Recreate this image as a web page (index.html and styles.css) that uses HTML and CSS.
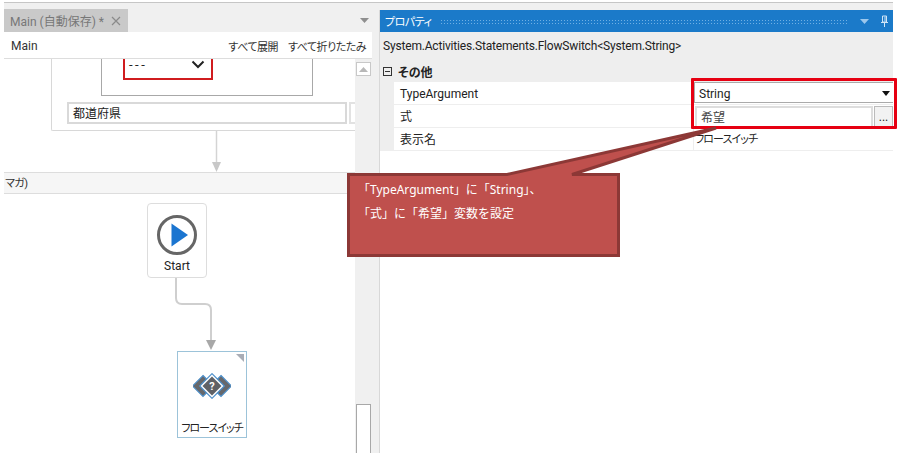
FILE: index.html
```html
<!DOCTYPE html>
<html lang="ja">
<head>
    <meta charset="UTF-8">
    <meta name="viewport" content="width=device-width, initial-scale=1.0">
    <title>フロースイッチのプロパティ</title>
    <link rel="stylesheet" href="styles.css">
</head>
<body>
    <div class="top-line"></div>
    <div class="app">

        <section class="designer">
            <div class="tab-strip">
                <div class="tab">
                    <span>Main (自動保存) *</span>
                    <svg class="tab-close" width="10" height="10" viewBox="0 0 10 10"><path d="M1 1l8 8M9 1l-8 8" stroke="#8a8a8a" stroke-width="1.2" fill="none"/></svg>
                </div>
                <svg class="tab-menu" width="9" height="5" viewBox="0 0 9 5"><path d="M0 0h9L4.5 5z" fill="#8f8f8f"/></svg>
            </div>
            <div class="breadcrumb">
                <span>Main</span>
                <div class="breadcrumb-actions">
                    <span class="jp-narrow">すべて展開</span>
                    <span class="jp-narrow">すべて折りたたみ</span>
                </div>
            </div>
            <div class="canvas-wrap">
                <div class="canvas">
                    <div class="seq-box"></div>
                    <div class="inner-box"></div>
                    <div class="red-select">
                        <span>---</span>
                        <svg width="14" height="9" viewBox="0 0 14 9"><path d="M1.5 1.5L7 7l5.500-5.500" stroke="#222" stroke-width="2" fill="none"/></svg>
                    </div>
                    <div class="pref-input">都道府県</div>
                    <div class="pref-btn"></div>
                    <div class="band"><span class="jp-narrow">マガ)</span></div>

                    <svg class="wires" width="351" height="394" viewBox="0 0 351 394">
                        <path d="M212.500 72V105" stroke="#d4d4d4" stroke-width="1.500" fill="none"/>
                        <path d="M208 103h9l-4.500 10z" fill="#c8c8c8"/>
                        <path d="M172 219v20q0 6 6 6h23q6 0 6 6v31" stroke="#cfcfcf" stroke-width="2" fill="none"/>
                        <path d="M202 281h10l-5 10z" fill="#a8a8a8"/>
                    </svg>

                    <div class="node node-start">
                        <svg width="42" height="42" viewBox="0 0 42 42">
                            <circle cx="21" cy="21" r="18.500" fill="none" stroke="#666" stroke-width="3"/>
                            <path d="M15.500 9.500L32 21 15.500 32.500z" fill="#1b75d0"/>
                        </svg>
                        <span class="node-label">Start</span>
                    </div>
                    <div class="node node-switch">
                        <span class="node-corner"></span>
                        <svg width="38" height="26" viewBox="0 0 38 26">
                            <path d="M10 2.500L20.500 13 10 23.500-.5 13z" fill="#66686c" stroke="#4d8fca" stroke-width="1.200"/>
                            <path d="M28 2.500L38.500 13 28 23.500 17.500 13z" fill="#66686c" stroke="#4d8fca" stroke-width="1.200"/>
                            <path d="M19 .7L31.300 13 19 25.300 6.700 13z" fill="#fff" stroke="#4d8fca" stroke-width="1.200"/>
                            <path d="M19 3.500L28.500 13 19 22.500 9.500 13z" fill="#5f6166"/>
                            <text x="19" y="17" class="switch-mark">?</text>
                        </svg>
                        <span class="node-label jp-narrow">フロースイッチ</span>
                    </div>
                </div>
                <div class="scrollbar">
                    <div class="scroll-up">
                        <svg width="9" height="5" viewBox="0 0 9 5"><path d="M0 5h9L4.500 0z" fill="#b8b8b8"/></svg>
                    </div>
                    <div class="scroll-thumb"></div>
                </div>
            </div>
        </section>

        <section class="props">
            <div class="props-title">
                <span class="jp-narrow">プロパティ</span>
                <div class="grip"></div>
                <svg width="9" height="5" viewBox="0 0 9 5"><path d="M0 0h9L4.500 5z" fill="#9cc7ec"/></svg>
                <svg class="pin" width="9" height="12" viewBox="0 0 9 12"><path d="M2.500 1h4v6h-4zM1 7.500h7M4.500 8v4M5 1.500v5" stroke="#cfe4f6" fill="none"/></svg>
            </div>
            <div class="props-type">System.Activities.Statements.FlowSwitch&lt;System.String&gt;</div>
            <div class="props-cat">
                <span class="collapse-box"></span>
                <span>その他</span>
            </div>
            <div class="prop-rows">
                <div class="prop-row">
                    <div class="prop-name">TypeArgument</div>
                    <div class="prop-value">
                        <div class="combo">
                            <span>String</span>
                            <svg width="8" height="5" viewBox="0 0 8 5"><path d="M0 0h8L4 5z" fill="#111"/></svg>
                        </div>
                    </div>
                </div>
                <div class="prop-row">
                    <div class="prop-name">式</div>
                    <div class="prop-value">
                        <div class="expr">希望</div>
                        <div class="expr-btn">...</div>
                    </div>
                </div>
                <div class="prop-row">
                    <div class="prop-name">表示名</div>
                    <div class="prop-value plain"><span class="jp-narrow">フロースイッチ</span></div>
                </div>
            </div>
        </section>
    </div>

    <!-- 注釈 -->
    <div class="highlight"></div>
    <svg class="callout-shape" width="901" height="453" viewBox="0 0 901 453">
        <path d="M348.500 174.500H507L716 128 572 174.500H618.500V255.500H348.500z" fill="#bf504d" stroke="#8c3836" stroke-width="3"/>
    </svg>
    <div class="callout-text">
        <p>「TypeArgument」に「String」、</p>
        <p>「式」に「希望」変数を設定</p>
    </div>
</body>
</html>
```

FILE: styles.css
```css
* {
    box-sizing: border-box;
}
body {
    margin: 0;
    width: 901px;
    height: 453px;
    overflow: hidden;
    position: relative;
    background-color: #fff;
    color: #222;
    font-family: Roboto, "Noto Sans CJK JP", sans-serif;
    font-size: 12px;
    font-feature-settings: "palt";
}
.jp-narrow {
    font-size: 11px;
    letter-spacing: -0.5px;
    white-space: nowrap;
}
.top-line {
    height: 1px;
    margin: 2px 8px 0 4px;
    background-color: #c6c6c6;
}
.app {
    display: flex;
    height: 450px;
    margin: 0 8px 0 4px;
    background-color: #f0f0f0;
}

/* 左: デザイナー */
.designer {
    width: 368px;
    display: flex;
    flex-direction: column;
}
.tab-strip {
    height: 29px;
    padding-top: 6px;
    display: flex;
    justify-content: space-between;
    align-items: center;
}
.tab {
    width: 124px;
    height: 23px;
    padding: 0 5px 0 6px;
    display: flex;
    align-items: center;
    justify-content: space-between;
    background-color: #c9c9c9;
    color: #777;
}
.tab-close {
    margin-right: 2px;
}
.tab-menu {
    margin-right: 3px;
}
.breadcrumb {
    height: 27px;
    padding: 2px 6px 0 7px;
    display: flex;
    justify-content: space-between;
    align-items: center;
    background-color: #fff;
    border-bottom: 1px solid #ddd;
    color: #333;
}
.breadcrumb-actions {
    display: flex;
    gap: 10px;
}
.canvas-wrap {
    flex: 1;
    display: flex;
    min-height: 0;
}
.canvas {
    flex: 1;
    position: relative;
    background-color: #fff;
}
.seq-box {
    position: absolute;
    left: 47px;
    top: 0;
    width: 304px;
    height: 72px;
    border: 1px solid #d8d8d8;
    border-width: 0 0 1px 1px;
    border-radius: 0 0 0 2px;
}
.inner-box {
    position: absolute;
    left: 97px;
    top: 0;
    width: 212px;
    height: 37px;
    border: 1px solid #a8a8a8;
    border-top: 0;
}
.red-select {
    position: absolute;
    left: 119px;
    top: 0;
    width: 90px;
    height: 21px;
    padding: 0 6px 7px 4px;
    display: flex;
    align-items: flex-end;
    justify-content: space-between;
    border: 2px solid #d01c1f;
    border-top: 0;
    background-color: #fff;
    font-size: 13px;
    line-height: 12px;
    letter-spacing: 2.5px;
}
.red-select svg {
    margin-bottom: 2px;
}
.pref-input {
    position: absolute;
    left: 63px;
    top: 43px;
    width: 280px;
    height: 22px;
    padding: 2px 0 0 4px;
    border: 2px solid #d9d9d9;
    line-height: 16px;
    background-color: #fff;
}
.pref-btn {
    position: absolute;
    left: 345px;
    top: 43px;
    width: 6px;
    height: 22px;
    border: 2px solid #e2e2e2;
    border-right: 0;
}
.band {
    position: absolute;
    left: 0;
    top: 113px;
    width: 351px;
    height: 22px;
    padding-left: 1px;
    background-color: #f6f6f6;
    border-top: 1px solid #ddd;
    border-bottom: 1px solid #ddd;
    line-height: 20px;
    color: #333;
}
.wires {
    position: absolute;
    left: 0;
    top: 0;
}
.node {
    position: absolute;
    display: flex;
    flex-direction: column;
    align-items: center;
    background-color: #fff;
}
.node-start {
    left: 143px;
    top: 144px;
    width: 60px;
    height: 75px;
    padding-top: 10px;
    border: 1px solid #ddd;
    border-radius: 4px;
}
.node-start .node-label {
    margin-top: 3px;
}
.node-switch {
    left: 173px;
    top: 292px;
    width: 70px;
    height: 87px;
    padding-top: 21px;
    border: 1px solid #9cc3d9;
}
.node-switch .node-label {
    margin-top: 20px;
    letter-spacing: -1px;
}
.node-corner {
    position: absolute;
    right: 2px;
    top: 2px;
    width: 0;
    height: 0;
    border-top: 8px solid #a9adb6;
    border-left: 8px solid transparent;
}
.switch-mark {
    fill: #fff;
    font-size: 11px;
    font-weight: bold;
    text-anchor: middle;
}
.scrollbar {
    width: 17px;
    padding: 3px 1px 0 1px;
    display: flex;
    flex-direction: column;
    justify-content: space-between;
    background-color: #f0f0f0;
}
.scroll-up {
    height: 14px;
    display: flex;
    align-items: center;
    justify-content: center;
    background-color: #fff;
    border: 1px solid #c8c8c8;
}
.scroll-thumb {
    height: 49px;
    background-color: #fff;
    border: 1px solid #a8a8a8;
    border-bottom: 0;
}

/* 右: プロパティ */
.props {
    margin: 7px 0 0 7px;
    width: 514px;
    align-self: stretch;
    background-color: #fff;
    border-left: 1px solid #d8d8d8;
    position: relative;
}
.props-title {
    height: 22px;
    padding: 0 4px 0 5px;
    display: flex;
    align-items: center;
    gap: 7px;
    background-color: #1b7ac9;
    color: #fff;
}
.grip {
    flex: 1;
    height: 5px;
    margin: 0 4px 0 1px;
    background-image: radial-gradient(#6fb0e4 0.6px, transparent 0.7px);
    background-size: 3px 3px;
}
.pin {
    margin-left: 4px;
}
.props-type {
    height: 28px;
    padding-left: 3px;
    line-height: 28px;
    background-color: #eee;
    white-space: nowrap;
    letter-spacing: -0.18px;
}
.props-cat {
    height: 22px;
    padding-left: 3px;
    padding-top: 1px;
    display: flex;
    align-items: center;
    gap: 6px;
    background-color: #eee;
    font-weight: bold;
}
.collapse-box {
    width: 9px;
    height: 9px;
    border: 1px solid #333;
    position: relative;
}
.collapse-box::after {
    content: "";
    position: absolute;
    left: 1px;
    top: 3px;
    width: 5px;
    height: 1px;
    background-color: #333;
}
.prop-rows {
    padding-left: 14px;
    background-color: #eee;
}
.prop-row {
    height: 23px;
    display: flex;
    background-color: #fff;
    border-bottom: 1px solid #eee;
}
.prop-name {
    width: 300px;
    padding-left: 6px;
    line-height: 24px;
    border-right: 1px solid #eee;
}
.prop-value {
    flex: 1;
    display: flex;
    min-width: 0;
}
.prop-value.plain {
    padding-left: 1px;
    line-height: 23px;
}
.prop-value.plain .jp-narrow {
    letter-spacing: -0.9px;
}
.combo {
    flex: 1;
    height: 21px;
    padding: 2px 3px 0 4px;
    display: flex;
    align-items: center;
    justify-content: space-between;
    border: 1px solid #aaa;
    border-right: 0;
}
.expr {
    flex: 1;
    margin: 1px 1px 0 1px;
    padding-left: 4px;
    line-height: 20px;
    border: 1px solid #ddd;
    border-width: 2px 2px 0 2px;
    color: #444;
}
.expr-btn {
    width: 19px;
    margin-top: 1px;
    text-align: center;
    line-height: 21px;
    background-color: #f2f2f2;
    border: 1px solid #bbb;
    border-bottom: 0;
}

/* 注釈 */
.highlight {
    position: absolute;
    left: 691px;
    top: 78px;
    width: 206px;
    height: 51px;
    border: 3px solid #e60012;
    border-radius: 1px;
}
.callout-shape {
    position: absolute;
    left: 0;
    top: 0;
}
.callout-text {
    position: absolute;
    left: 358px;
    top: 178px;
    color: #fff;
    font-family: "Noto Sans", "Noto Sans CJK JP", sans-serif;
    font-feature-settings: normal;
}
.callout-text p {
    margin: 0;
    height: 24px;
    line-height: 24px;
}
```
